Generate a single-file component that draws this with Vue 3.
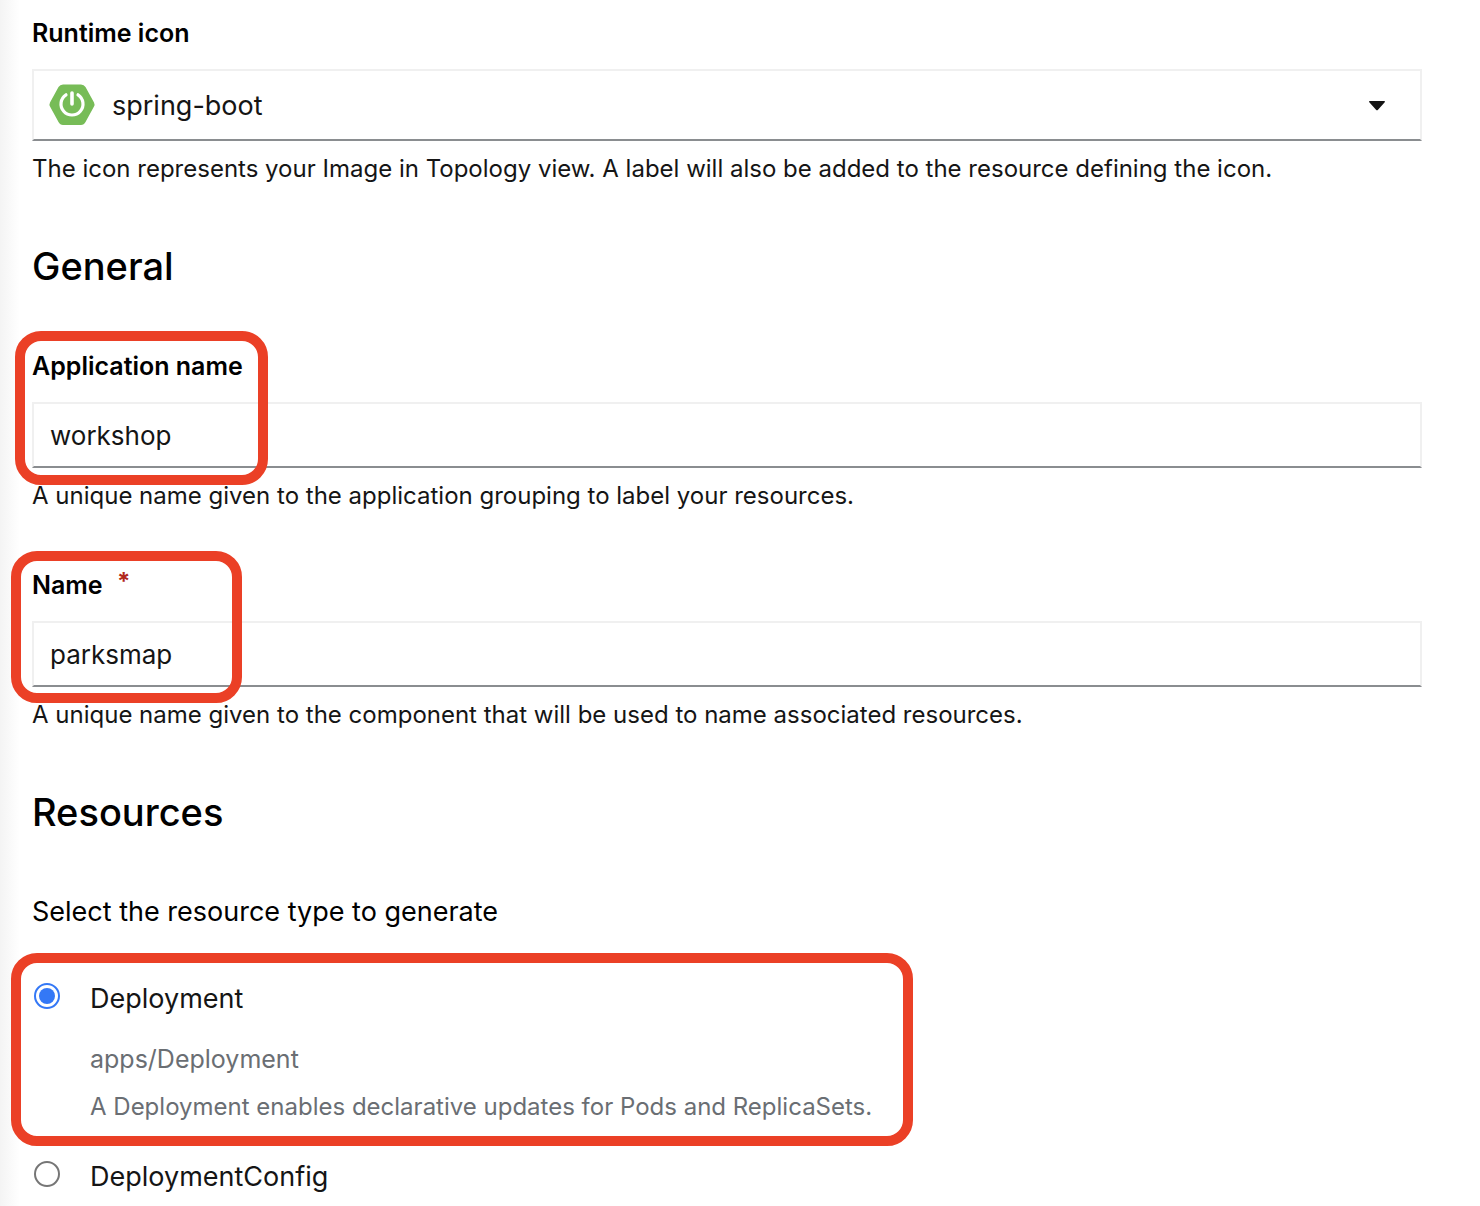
<script setup>
import { ref } from 'vue'

const icon = ref('spring-boot')
const appName = ref('workshop')
const name = ref('parksmap')
const resource = ref('deployment')
</script>

<template>
  <main class="page">
    <form class="form" @submit.prevent>
      <div class="group">
        <label class="label" for="runtime-icon">Runtime icon</label>
        <div class="select-wrap">
          <select id="runtime-icon" v-model="icon" class="control select" aria-describedby="icon-help">
            <option value="spring-boot">spring-boot</option>
          </select>
          <svg class="spring" viewBox="0 0 46 42" aria-hidden="true">
            <path fill="#77bc57" d="M14 .5H32Q35 .5 36.500 3L45 18.500Q46 20.500 45 22.500L36.500 38Q35 41 32 41H14Q11 41 9.500 38L1 22.500Q0 20.500 1 18.500L9.500 3Q11 .5 14 .5Z" />
            <path d="M17 10.800A11 11 0 1 0 29 10.800" fill="none" stroke="#fff" stroke-width="3.200" stroke-linecap="round" />
            <path d="M23 9V20" stroke="#fff" stroke-width="3.600" stroke-linecap="round" />
          </svg>
          <svg class="caret" viewBox="0 0 18 10" aria-hidden="true">
            <path d="M1.500 0H16.500Q17.500 .500 16.500 1.500L10 8.800Q9 9.800 8 8.800L1.500 1.500Q.500 .500 1.500 0Z" fill="#151515" />
          </svg>
        </div>
        <p id="icon-help" class="help">The icon represents your Image in Topology view. A label will also be added to the resource defining the icon.</p>
      </div>

      <h2 class="heading">General</h2>

      <div class="group marked mark-app">
        <label class="label" for="app-name">Application name</label>
        <input id="app-name" v-model="appName" class="control" type="text" aria-describedby="app-help" />
        <p id="app-help" class="help">A unique name given to the application grouping to label your resources.</p>
      </div>

      <div class="group marked mark-name">
        <label class="label" for="name">Name <span class="required" aria-hidden="true">*</span></label>
        <input id="name" v-model="name" class="control" type="text" required aria-describedby="name-help" />
        <p id="name-help" class="help">A unique name given to the component that will be used to name associated resources.</p>
      </div>

      <h2 class="heading">Resources</h2>

      <fieldset class="resources">
        <legend class="legend">Select the resource type to generate</legend>
        <div class="option marked mark-option">
          <input id="deployment" v-model="resource" class="radio" type="radio" name="resource" value="deployment" />
          <div class="option-body">
            <label class="option-label" for="deployment">Deployment</label>
            <p class="kind">apps/Deployment</p>
            <p class="description">A Deployment enables declarative updates for Pods and ReplicaSets.</p>
          </div>
        </div>
        <div class="option">
          <input id="deployment-config" v-model="resource" class="radio" type="radio" name="resource" value="deployment-config" />
          <label class="option-label" for="deployment-config">DeploymentConfig</label>
        </div>
      </fieldset>
    </form>
  </main>
</template>

<style>
body {
  margin: 0;
  background: #fff;
}
</style>

<style scoped>
.page {
  box-sizing: border-box;
  min-height: 100vh;
  padding: 14px 58px 8px 32px;
  background: linear-gradient(to right, #f4f4f4, #fff 20px);
  color: #151515;
  font-family: Inter, "Liberation Sans", sans-serif;
  font-size: 25px;
  line-height: 39px;
}

.form {
  display: flex;
  flex-direction: column;
  gap: 51px;
}

.group {
  display: flex;
  flex-direction: column;
}

.label {
  margin-bottom: 16px;
  color: #000;
  font-weight: 600;
}

.required {
  margin-left: 8px;
  color: #b1281c;
  font-size: 24px;
  font-weight: 700;
  line-height: 1;
  vertical-align: 4px;
}

.control {
  box-sizing: border-box;
  width: 100%;
  height: 66px;
  padding: 0 16px;
  border: 2px solid #f0f0f0;
  border-bottom-color: #8a8d90;
  border-radius: 0;
  background: #fff;
  color: #151515;
  font: inherit;
}

.select-wrap {
  position: relative;
}

.select {
  display: block;
  height: 72px;
  padding: 0 72px 0 78px;
  font-size: 27px;
  appearance: none;
}

.spring {
  position: absolute;
  top: 15px;
  left: 17px;
  width: 46px;
  height: 42px;
  pointer-events: none;
}

.caret {
  position: absolute;
  top: 32px;
  right: 36px;
  width: 18px;
  height: 10px;
  pointer-events: none;
}

.help {
  margin: 8px 0 0;
  font-size: 24px;
}

.heading {
  margin: 0 0 3px;
  color: #000;
  font-size: 38px;
  font-weight: 500;
  line-height: 54px;
}

.marked {
  position: relative;
}

.marked::after {
  position: absolute;
  box-sizing: border-box;
  border: 10px solid #eb4026;
  border-radius: 26px;
  content: "";
  pointer-events: none;
}

.mark-app::after {
  top: -16px;
  left: -17px;
  width: 253px;
  height: 154px;
}

.mark-name::after {
  top: -15px;
  left: -21px;
  width: 231px;
  height: 152px;
}

.mark-option::after {
  inset: -24px -41px -20px -21px;
}

.control[type="text"] {
  font-size: 26px;
}

.resources {
  display: flex;
  flex-direction: column;
  align-items: flex-start;
  gap: 29px;
  margin: 0;
  padding: 0;
  border: 0;
}

.legend {
  margin-bottom: 47px;
  padding: 0;
  color: #000;
  font-size: 27px;
  line-height: 37px;
}

.option {
  display: flex;
  align-items: flex-start;
  gap: 30px;
}

.radio {
  display: grid;
  flex: none;
  place-items: center;
  box-sizing: border-box;
  width: 26px;
  height: 26px;
  margin: 6px 0 0 2px;
  border: 2px solid #767676;
  border-radius: 50%;
  background: #fff;
  appearance: none;
}

.radio:checked {
  border-color: #3478f6;
}

.radio:checked::before {
  width: 16px;
  height: 16px;
  border-radius: 50%;
  background: #3478f6;
  content: "";
}

.option-label {
  display: block;
  font-size: 27px;
  line-height: 44px;
}

.kind,
.description {
  margin: 0;
  color: #6a6e73;
}

.kind {
  margin-top: 19px;
}

.description {
  margin-top: 8px;
  font-size: 24px;
}
</style>
